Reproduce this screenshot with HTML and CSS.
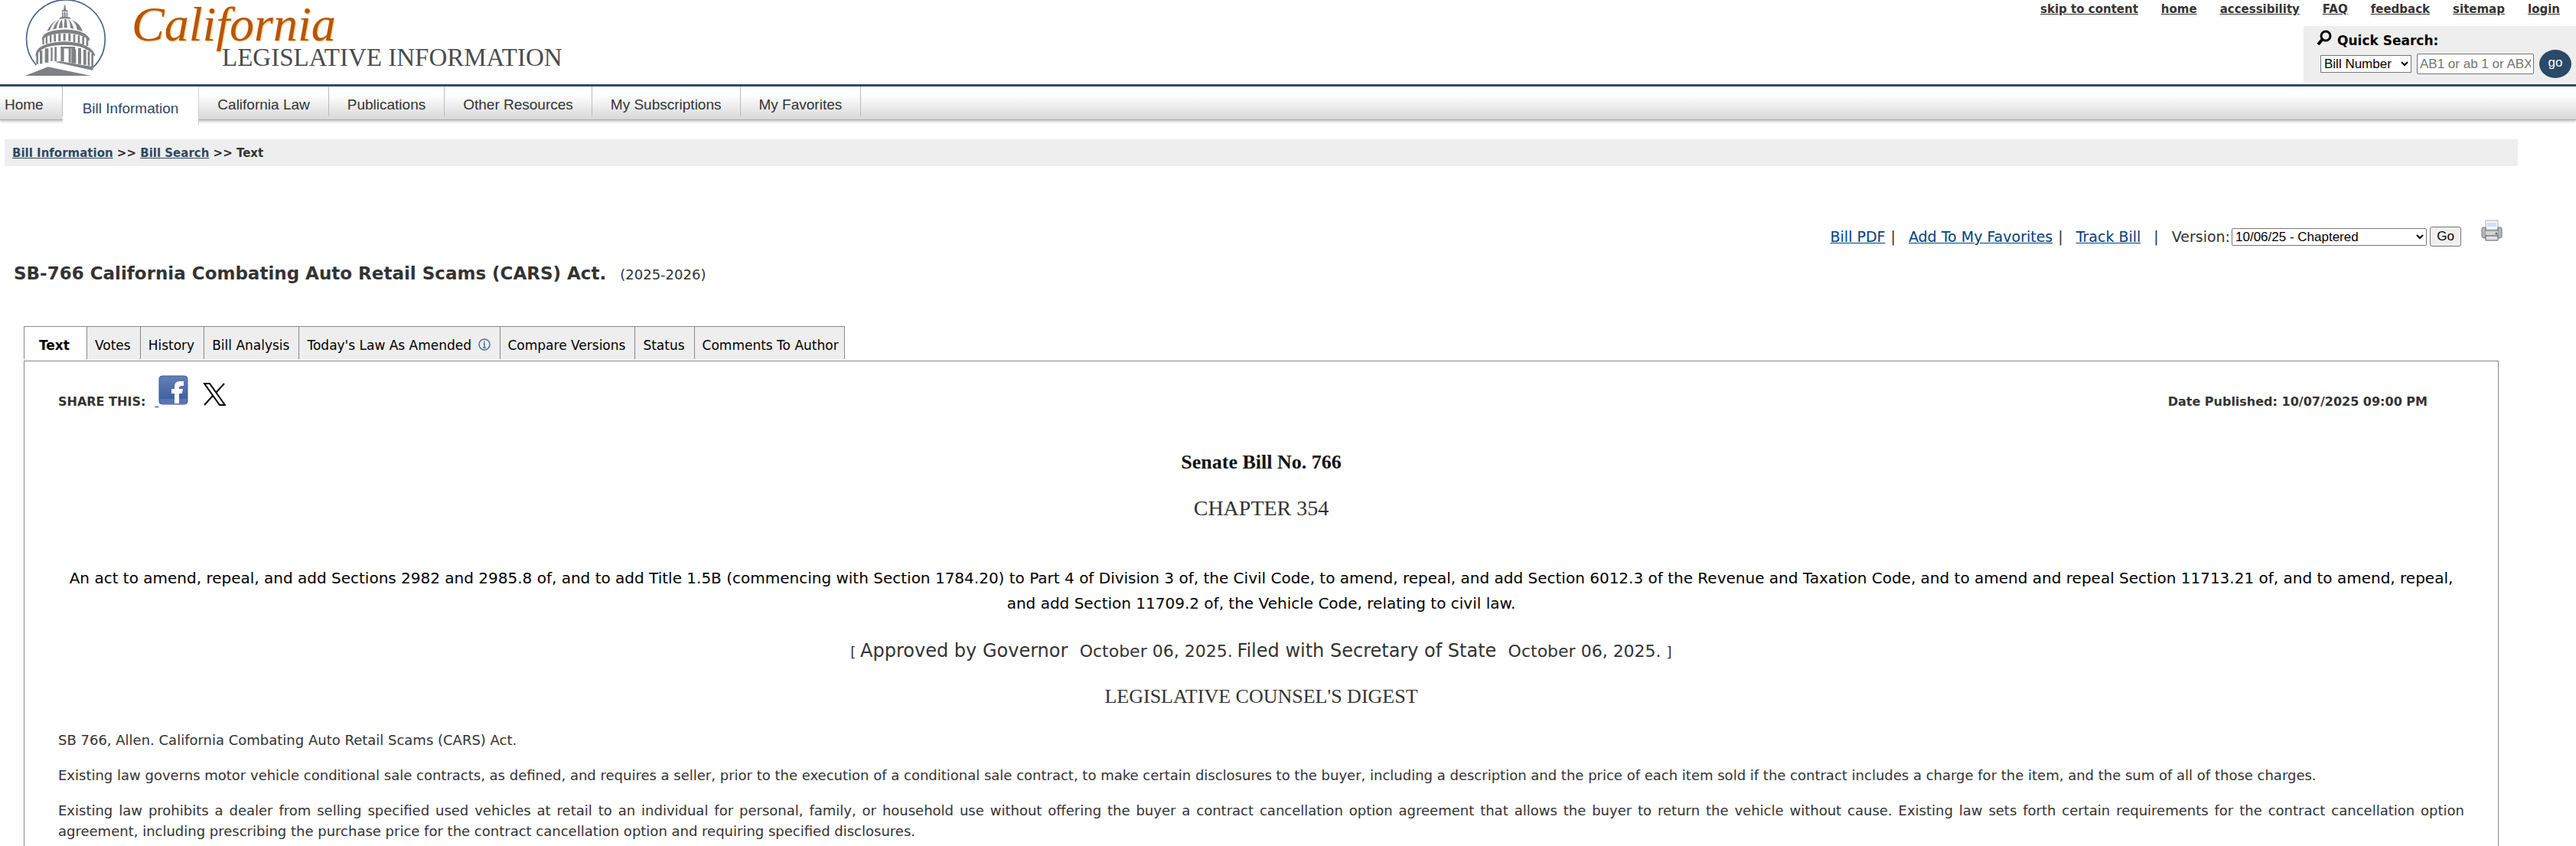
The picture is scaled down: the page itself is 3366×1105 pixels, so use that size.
FILE: index.html
```html
<!DOCTYPE html>
<html lang="en">
<head>
<meta charset="utf-8">
<title>SB-766 California Combating Auto Retail Scams (CARS) Act.</title>
<link rel="stylesheet" href="styles.css">
</head>
<body>
<header class="site-header">
  <div class="brand">
    <svg class="seal" viewBox="30 0 330 300" aria-hidden="true">
      <path d="M82 255A154 154 0 1 1 305 264" fill="none" stroke="#47678c" stroke-width="5"/>
      <g fill="#808184">
        <path d="M38 297 128 262 297 297z"/>
        <path d="M155 243 175 240 306 262 304 276z"/>
        <path d="M192 20h4l3 20h-10zM182 40h24v5h-24zM183 47h5v20h-5zM191 47h6v20h-6zM200 47h5v20h-5z"/>
        <path d="M175 68q20-5 39 0l4 7q-23-5-46 0z"/>
        <path d="M168 76q-30 14-44 47l12-5q8-28 32-42zM173 76q-18 14-26 40l14-4q4-22 12-36zM183 75q-11 14-13 36l16-2q-2-20-3-34zM193 75l-2 34h13l-4-34zM208 76q8 15 8 34l13 3q-6-25-21-37zM222 79q18 15 20 37l22 7q-10-32-42-44z"/>
        <path d="M105 148q4-18 40-27 50-11 100 0 32 8 46 30v10q-16-18-46-25-50-12-100 0-32 8-40 22z"/>
        <path d="M106 148h7v26h-7zM119 142h7v29h-7zM135 137h7v29h-7zM151 134h8v29h-8zM169 132h9v29h-9zM188 131h9v29h-9zM208 132h9v29h-9zM227 135h8v30h-8zM245 139h8v30h-8zM262 144h8v30h-8zM278 150h8v30h-8z"/>
        <path d="M80 210q4-24 45-38 65-18 130-2 44 14 57 42v10q-20-28-60-40-60-12-124 1-34 10-48 40z"/>
        <path d="M82 205h8v46h-8zM96 198h10v52h-10zM116 190h14v55h-14zM139 186h7v54h-7zM154 184h8v56h-8zM178 183h13v58h-13zM209 183h9v62h-9zM220 186q18-2 18 14v48h-18zM246 188h12v63h-12zM267 194h11v60h-11zM284 202h8v55h-8zM298 210h8v52h-8z"/>
        <path d="M178 183h56v7h-56z"/>
      </g>
    </svg>
    <div class="wordmark">
      <span class="script">California</span>
      <span class="caps">LEGISLATIVE INFORMATION</span>
    </div>
  </div>
  <div class="header-right">
    <nav class="top-links" aria-label="Utility">
      <a href="#">skip to content</a>
      <a href="#">home</a>
      <a href="#">accessibility</a>
      <a href="#">FAQ</a>
      <a href="#">feedback</a>
      <a href="#">sitemap</a>
      <a href="#">login</a>
    </nav>
    <form class="quick-search">
      <label class="quick-label" for="quick-text">
        <svg width="20" height="20" viewBox="0 0 20 20" aria-hidden="true"><ellipse cx="12" cy="8" rx="6" ry="6" fill="none" stroke="#000" stroke-width="3"/><path d="M8 12l-6 7" stroke="#000" stroke-width="4"/></svg>
        Quick Search:
      </label>
      <div class="quick-fields">
        <select class="quick-type" aria-label="Search by"><option>Bill Number</option></select>
        <input class="quick-text" id="quick-text" type="text" placeholder="AB1 or ab 1 or ABX1-1">
        <button class="quick-go" type="button">go</button>
      </div>
    </form>
  </div>
</header>
<nav class="main-nav" aria-label="Main">
  <a href="#">Home</a>
  <a class="active" href="#">Bill Information</a>
  <a href="#">California Law</a>
  <a href="#">Publications</a>
  <a href="#">Other Resources</a>
  <a href="#">My Subscriptions</a>
  <a href="#">My Favorites</a>
</nav>
<main class="content">
  <div class="breadcrumbs"><a href="#">Bill Information</a> &gt;&gt; <a href="#">Bill Search</a> &gt;&gt; Text</div>
  <form class="bill-tools">
    <a href="#">Bill PDF</a>
    <span class="bar">|</span>
    <a href="#">Add To My Favorites</a>
    <span class="bar">|</span>
    <a href="#">Track Bill</a>
    <span class="bar wide">|</span>
    <label for="version">Version:</label>
    <select class="version" id="version"><option>10/06/25 - Chaptered</option></select>
    <button class="version-go" type="button">Go</button>
    <svg class="printer" width="28" height="28" viewBox="0 0 28 28" aria-hidden="true">
      <path d="M6 1h16v12H6z" fill="#f5f7fd" stroke="#a9adb8"/>
      <path d="M8 4h12v5H8z" fill="#d5defa"/>
      <path d="M1 12q0-2 2-2h3v4h16v-4h3q2 0 2 2v9q0 3-3 3H4q-3 0-3-3z" fill="#b4b6b7" stroke="#77797b"/>
      <path d="M6 12v10M22 12v10" stroke="#7c7e80"/>
      <path d="M6 15h16v5H6z" fill="#d2d3d3"/>
      <circle cx="20" cy="18" r="1.5" fill="#666"/>
      <path d="M6 21h16v6H6z" fill="#e0e1e2" stroke="#5a5c5e"/>
    </svg>
  </form>
  <h1 class="bill-title">SB-766 California Combating Auto Retail Scams (CARS) Act. <span class="session">(2025-2026)</span></h1>
  <nav class="tabs" aria-label="Bill">
    <a class="current" href="#">Text</a>
    <a href="#">Votes</a>
    <a href="#">History</a>
    <a href="#">Bill Analysis</a>
    <a href="#">Today's Law As Amended
      <svg width="16" height="16" viewBox="0 0 16 16" aria-hidden="true"><circle cx="8" cy="8" r="7" fill="none" stroke="#4d6f98" stroke-width="1.5"/><path d="M8 3.5v2M6.5 7H8v5M6 12h4" fill="none" stroke="#4d6f98" stroke-width="1.5"/></svg>
    </a>
    <a href="#">Compare Versions</a>
    <a href="#">Status</a>
    <a href="#">Comments To Author</a>
  </nav>
  <article class="panel">
    <div class="meta">
      <div class="share">
        <span>SHARE THIS:</span>
        <a class="facebook" href="#" aria-label="Facebook">&nbsp;<svg width="40" height="40" viewBox="0 0 40 40" aria-hidden="true">
          <defs><linearGradient id="fb" x2="0" y2="1"><stop offset="0" stop-color="#6480b6"/><stop offset="1" stop-color="#38599c"/></linearGradient></defs>
          <rect x="1" y="1" width="37" height="37" rx="4" fill="url(#fb)" stroke="#3a5a99"/>
          <path d="M2 31h35v4q0 3-3 3H5q-3 0-3-3z" fill="#5877b2"/>
          <path d="M21 37V24h-4v-6h4v-3q0-7 7-7h5v6h-3q-3 0-3 3v1h5l-1 6h-4v13z" fill="#fff"/>
        </svg></a>
        <a class="x-link" href="#" aria-label="X"><svg width="30" height="30" viewBox="0 0 30 30" aria-hidden="true">
          <path d="M2 1h7l20 28h-7zM28 1 17 13M13 17 2 29" fill="none" stroke="#000" stroke-width="2"/>
        </svg></a>
      </div>
      <div class="published">Date Published: 10/07/2025 09:00 PM</div>
    </div>
    <h2 class="bill-no">Senate Bill No. 766</h2>
    <div class="chapter">CHAPTER 354</div>
    <p class="act">An act to amend, repeal, and add Sections 2982 and 2985.8 of, and to add Title 1.5B (commencing with Section 1784.20) to Part 4 of Division 3 of, the Civil Code, to amend, repeal, and add Section 6012.3 of the Revenue and Taxation Code, and to amend and repeal Section 11713.21 of, and to amend, repeal, and add Section 11709.2 of, the Vehicle Code, relating to civil law.</p>
    <p class="approval">[ <span class="event">Approved by Governor&nbsp; </span><span class="date">October 06, 2025.</span> <span class="event">Filed with Secretary of State&nbsp; </span><span class="date">October 06, 2025. </span>]</p>
    <h3 class="digest-title">LEGISLATIVE COUNSEL'S DIGEST</h3>
    <div class="digest">
      <p>SB 766, Allen. California Combating Auto Retail Scams (CARS) Act.</p>
      <p>Existing law governs motor vehicle conditional sale contracts, as defined, and requires a seller, prior to the execution of a conditional sale contract, to make certain disclosures to the buyer, including a description and the price of each item sold if the contract includes a charge for the item, and the sum of all of those charges.</p>
      <p>Existing law prohibits a dealer from selling specified used vehicles at retail to an individual for personal, family, or household use without offering the buyer a contract cancellation option agreement that allows the buyer to return the vehicle without cause. Existing law sets forth certain requirements for the contract cancellation option agreement, including prescribing the purchase price for the contract cancellation option and requiring specified disclosures.</p>
    </div>
  </article>
</main>
</body>
</html>
```
FILE: styles.css
```css
* { box-sizing: border-box; }

body {
  margin: 0;
  background: #fff;
  color: #333;
  font-family: "DejaVu Sans", Verdana, sans-serif;
  font-size: 18px;
}

select, input, button { font-family: "Liberation Sans", Arial, sans-serif; font-size: 17px; }

.site-header {
  display: flex;
  justify-content: space-between;
  border-bottom: 3px solid #2b4968;
}
.brand { display: flex; gap: 32px; padding-left: 30px; }
.seal { width: 110px; height: 100px; }
.wordmark { display: flex; flex-direction: column; font-family: "Liberation Serif", "Times New Roman", serif; }
.script {
  color: #b95504;
  font-size: 64px;
  font-style: italic;
  font-weight: 400;
  line-height: 64px;
  text-shadow: 1px 1px 2px #f3c77c;
}
.caps { margin-left: 118px; color: #4a4b4d; font-size: 33px; line-height: 22px; }

.header-right { display: flex; flex-direction: column; align-items: flex-end; }
.top-links { display: flex; gap: 30px; height: 34px; padding: 2px 21px 0 0; font-size: 15px; font-weight: 700; line-height: 20px; }
.top-links a { color: #333; }
.quick-search { width: 356px; height: 74px; margin-bottom: 2px; padding: 5px 6px 0 17px; background: #eee; }
.quick-label { display: flex; gap: 7px; height: 26px; color: #000; font-size: 17px; font-weight: 700; line-height: 28px; }
.quick-fields { display: flex; align-items: center; gap: 7px; padding-left: 5px; }
.quick-type { width: 119px; height: 23px; padding: 0; background: #fff; border: 1px solid #767676; color: #000; }
.quick-text { width: 153px; height: 27px; padding: 1px 3px; border: 1px solid #767676; border-radius: 2px; }
.quick-go { width: 42px; height: 37px; padding: 0 0 4px; border: 0; border-radius: 50%; background: #2b4968; color: #fff; }

.main-nav {
  display: flex;
  align-items: flex-start;
  height: 44px;
  border-bottom: 1px solid #aaa;
  background: linear-gradient(#fff 25%, #d8d8d8);
  box-shadow: 0 2px 3px #ccc;
  font-family: "Liberation Sans", Arial, sans-serif;
  font-size: 19px;
  line-height: 48px;
}
.main-nav a { height: 39px; padding: 0 24px; border-right: 1px solid #bbb; color: #333; text-decoration: none; }
.main-nav a:first-child { padding-left: 6px; }
.main-nav .active { position: relative; height: 50px; padding: 0 26px; background: #fff; border-right: 1px solid #ccc; color: #2b4968; line-height: 58px; }

.content { margin: 25px 76px 0 6px; }
.breadcrumbs { padding: 2px 10px 0; background: #eee; font-size: 15px; font-weight: 700; line-height: 33px; }
.breadcrumbs a { color: #2b4968; }

.bill-tools { display: flex; align-items: center; justify-content: flex-end; height: 44px; margin-top: 70px; padding-right: 20px; font-size: 19px; }
.bill-tools a { color: #00407f; }
.bar { padding: 0 17px 0 7px; }
.bar.wide { padding-left: 17px; }
.version { width: 255px; height: 23px; margin: 0 4px 0 2px; background: #fff; border: 1px solid #767676; border-radius: 2px; color: #000; }
.version-go { width: 41px; height: 26px; padding: 0; background: #efefef; border: 1px solid #767676; border-radius: 3px; color: #000; }
.printer { align-self: flex-start; margin-left: 26px; }

.bill-title { margin: 12px 0 0; padding-left: 12px; font-size: 23px; line-height: 28px; }
.session { margin-left: 10px; font-size: 18px; font-weight: 400; }

.tabs { display: flex; width: max-content; height: 43px; margin: 53px 0 2px 25px; border: 1px solid #888; border-width: 1px 0 0 1px; font-size: 17px; line-height: 48px; }
.tabs a { padding: 0 12px 0 10px; border-right: 1px solid #888; background: #eee; color: #000; text-decoration: none; }
.tabs a:last-child { padding-right: 7px; }
.tabs .current { padding: 0 22px 0 19px; background: #fff; font-weight: 700; }
.tabs svg { margin-left: 3px; vertical-align: -1px; }

.panel { margin: 0 25px; padding: 18px 44px 20px; border: 1px solid #888; border-bottom: 0; }
.meta { display: flex; justify-content: space-between; align-items: flex-end; height: 44px; padding-right: 48px; font-size: 16px; font-weight: 700; line-height: 18px; }
.share { display: flex; align-items: flex-end; }
.facebook { margin-left: 12px; color: #00407f; font-weight: 400; line-height: 18px; }
.facebook svg { vertical-align: 0; }
.x-link { margin: 0 0 4px 18px; }
.x-link svg { display: block; }

.bill-no, .chapter, .digest-title { margin: 0; font-family: "Liberation Serif", "Times New Roman", serif; text-align: center; }
.bill-no { margin-top: 54px; color: #111; font-size: 26px; line-height: 32px; }
.chapter { margin-top: 28px; font-size: 28px; line-height: 32px; }
.act { margin: 59px 12px 0; color: #000; font-size: 20px; line-height: 33px; text-align: center; }
.approval { margin: 30px 0 0; line-height: 30px; text-align: center; }
.event { font-size: 24px; }
.date { font-size: 22px; }
.digest-title { margin-top: 27px; font-size: 26px; font-weight: 400; line-height: 32px; }
.digest { margin-top: 27px; line-height: 27px; text-align: justify; }
.digest p { margin: 0 0 19px; }
```
